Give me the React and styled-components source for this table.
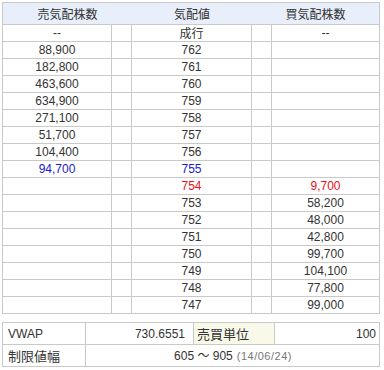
import React from "react";
import styled, { createGlobalStyle } from "styled-components";

const Global = createGlobalStyle`
  html, body { margin: 0; padding: 0; background: #fff; }
  body { font-family: "Liberation Sans", Arial, "Noto Sans CJK JP", sans-serif; font-size: 12px; color: #333; }
`;

const Page = styled.div`
  padding: 2px;
  width: 378px;
`;

const Board = styled.div`
  display: grid;
  grid-template-columns: 109px 20px 120px 20px 108px;
  grid-template-rows: 22px repeat(17, 17px);
  border-top: 1px solid #c9c9c9;
  border-left: 1px solid #c9c9c9;
  width: 378px;
  box-sizing: border-box;
`;

const Head = styled.div`
  grid-column: span ${(p) => p.$span || 1};
  box-sizing: border-box;
  background: #e8eefa;
  border-bottom: 1px solid #c9c9c9;
  border-right: ${(p) => (p.$last ? "1px solid #c9c9c9" : "none")};
  display: flex;
  align-items: center;
  justify-content: center;
  font-family: "Noto Sans CJK JP", sans-serif;
  font-size: 12px;
  line-height: 14px;
  color: #333;
`;

const Cell = styled.div`
  box-sizing: border-box;
  border-right: 1px solid #c9c9c9;
  border-bottom: 1px solid #c9c9c9;
  display: flex;
  align-items: center;
  justify-content: center;
  line-height: 14px;
  color: ${(p) => (p.$tone === "blue" ? "#1a1acc" : p.$tone === "red" ? "#e8101a" : "#333")};
  font-family: ${(p) => (p.$jp ? `"Noto Sans CJK JP", sans-serif` : "inherit")};
`;

const Info = styled.div`
  margin-top: 8px;
  display: grid;
  grid-template-columns: 83px 108px 81px 105px;
  grid-template-rows: 22px 22px;
  border-top: 1px solid #c9c9c9;
  border-left: 1px solid #c9c9c9;
  width: 378px;
  box-sizing: border-box;
`;

const InfoCell = styled.div`
  grid-column: span ${(p) => p.$span || 1};
  box-sizing: border-box;
  border-right: 1px solid #c9c9c9;
  border-bottom: 1px solid #c9c9c9;
  display: flex;
  align-items: center;
  justify-content: ${(p) => (p.$align === "right" ? "flex-end" : p.$align === "center" ? "center" : "flex-start")};
  padding: 0 ${(p) => p.$pr ?? 4}px 0 ${(p) => p.$pl ?? 5}px;
  background: ${(p) => (p.$label ? "#f9f9ea" : "#fff")};
  font-family: ${(p) => (p.$jp ? `"Noto Sans CJK JP", sans-serif` : "inherit")};
  font-size: ${(p) => (p.$jp ? "13px" : "12px")};
  line-height: 16px;
  color: #333;
  white-space: nowrap;
`;

const DateNote = styled.span`
  font-size: 11px;
  letter-spacing: 0.5px;
  color: #777;
  margin-left: 4px;
`;

const rows = [
  { sell: "--", price: "成行", buy: "--", jp: true },
  { sell: "88,900", price: "762" },
  { sell: "182,800", price: "761" },
  { sell: "463,600", price: "760" },
  { sell: "634,900", price: "759" },
  { sell: "271,100", price: "758" },
  { sell: "51,700", price: "757" },
  { sell: "104,400", price: "756" },
  { sell: "94,700", price: "755", tone: "blue" },
  { price: "754", buy: "9,700", tone: "red" },
  { price: "753", buy: "58,200" },
  { price: "752", buy: "48,000" },
  { price: "751", buy: "42,800" },
  { price: "750", buy: "99,700" },
  { price: "749", buy: "104,100" },
  { price: "748", buy: "77,800" },
  { price: "747", buy: "99,000" },
];

export default function App() {
  return (
    <Page>
      <Global />
      <Board>
        <Head $span={2}>売気配株数</Head>
        <Head>気配値</Head>
        <Head $span={2} $last>買気配株数</Head>
        {rows.map((r, i) => (
          <React.Fragment key={i}>
            <Cell $tone={r.tone}>{r.sell || ""}</Cell>
            <Cell />
            <Cell $tone={r.tone} $jp={r.jp}>{r.price}</Cell>
            <Cell />
            <Cell $tone={r.tone}>{r.buy || ""}</Cell>
          </React.Fragment>
        ))}
      </Board>
      <Info>
        <InfoCell $pl={5}>VWAP</InfoCell>
        <InfoCell $align="right" $pr={8}>730.6551</InfoCell>
        <InfoCell $label $jp $pl={3}>売買単位</InfoCell>
        <InfoCell $align="right" $pr={3}>100</InfoCell>
        <InfoCell $jp $pl={5}>制限値幅</InfoCell>
        <InfoCell $span={3} $align="center">
          605 ～ 905<DateNote>(14/06/24)</DateNote>
        </InfoCell>
      </Info>
    </Page>
  );
}
